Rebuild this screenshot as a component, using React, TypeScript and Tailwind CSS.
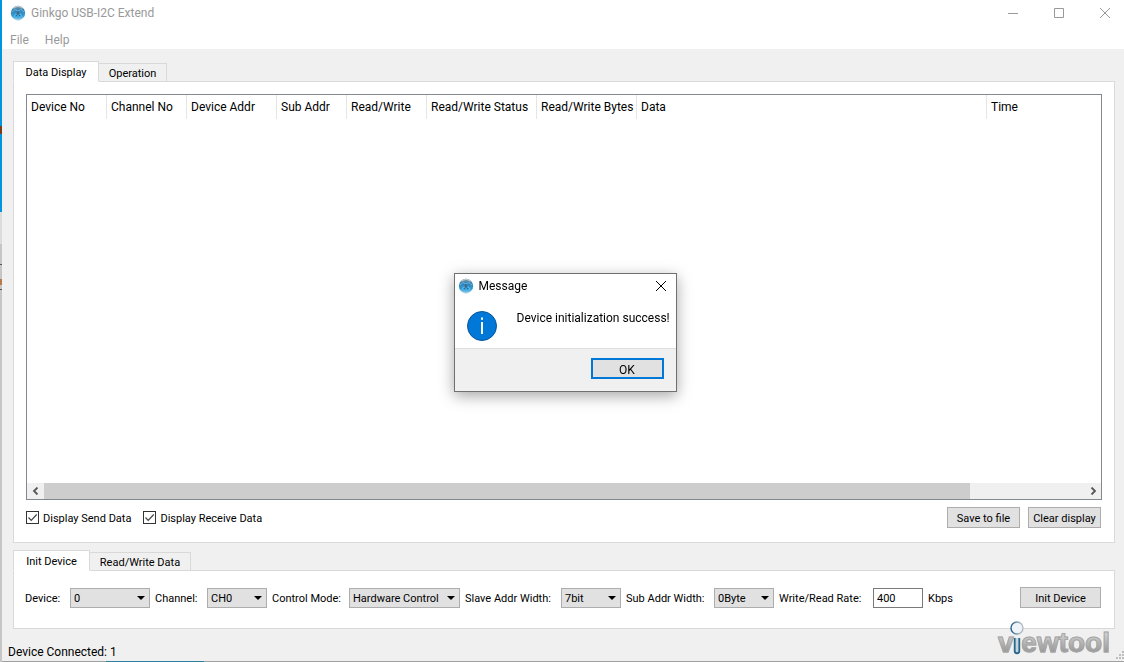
import { ReactNode, useState } from 'react';
import clsx from 'clsx';

const COLUMNS = [
  { title: 'Device No', width: 'w-[80px]' },
  { title: 'Channel No', width: 'w-[80px]' },
  { title: 'Device Addr', width: 'w-[90px]' },
  { title: 'Sub Addr', width: 'w-[70px]' },
  { title: 'Read/Write', width: 'w-[80px]' },
  { title: 'Read/Write Status', width: 'w-[110px]' },
  { title: 'Read/Write Bytes', width: 'w-[100px]' },
  { title: 'Data', width: 'w-[350px]' },
  { title: 'Time', width: '' },
];

const DISPLAY_TABS = [
  { name: 'Data Display', width: 'w-[86px]' },
  { name: 'Operation', width: 'w-[68px]' },
];

const DEVICE_TABS = [
  { name: 'Init Device', width: 'w-[77px]' },
  { name: 'Read/Write Data', width: 'w-[101px]' },
];

const FIELDS = [
  { id: 'device', label: 'Device:', labelWidth: 'w-[40px]', width: 'w-[80px]', options: ['0', '1', '2'] },
  { id: 'channel', label: 'Channel:', labelWidth: 'w-[47px]', width: 'w-[60px]', options: ['CH0', 'CH1'] },
  { id: 'mode', label: 'Control Mode:', labelWidth: 'w-[72px]', width: 'w-[111px]', options: ['Hardware Control', 'Software Control'] },
  { id: 'slave', label: 'Slave Addr Width:', labelWidth: 'w-[91px]', width: 'w-[60px]', options: ['7bit', '10bit'] },
  { id: 'sub', label: 'Sub Addr Width:', labelWidth: 'w-[83px]', width: 'w-[60px]', options: ['0Byte', '1Byte', '2Byte'] },
];

function AppIcon() {
  return (
    <svg viewBox="0 0 16 16" className="h-4 w-4 shrink-0" aria-hidden>
      <defs>
        <linearGradient id="globe" x1="0" x2="0" y1="0" y2="1">
          <stop offset="0" stopColor="#7d98aa" />
          <stop offset="0.3" stopColor="#3580b0" />
          <stop offset="0.7" stopColor="#2f9dd8" />
          <stop offset="1" stopColor="#8ccdec" />
        </linearGradient>
      </defs>
      <circle cx="8" cy="8" r="7.2" fill="url(#globe)" />
      <path d="M3.500 3.200C5 1.800 6.500 1.300 8 1.300s3 .5 4.500 1.900" fill="none" stroke="#b9c6ce" strokeWidth="1.200" />
      <path d="M2 7l3-2.500L8 6l3-1.500L14 7M4 12l1.500-3L8 10l2.500-1L12 12" fill="none" stroke="#6fc3ea" strokeWidth="0.8" />
      <path d="M8 8.500V6M8 8.500 6 11M8 8.500l2 2.500" fill="none" stroke="#1c5e8c" strokeWidth="0.9" />
      <path d="M6.800 7 8.500 9" stroke="#7d4a58" strokeWidth="1" />
      <path d="M3 13c1.600 1.600 3.200 2.200 5 2.200s3.400-.6 5-2.200" fill="none" stroke="#c4dce8" strokeWidth="0.9" />
    </svg>
  );
}

function Tabs({ tabs }: { tabs: { name: string; width: string }[] }) {
  const [active, setActive] = useState(tabs[0].name);
  return (
    <div role="tablist" className="relative z-10 -mb-px flex h-[21px] items-end">
      {tabs.map(({ name, width }) => (
        <button
          key={name}
          type="button"
          role="tab"
          aria-selected={name === active}
          onClick={() => setActive(name)}
          className={clsx(
            'border border-[#d9d9d9] pt-0.5 whitespace-nowrap',
            name === active ? 'h-[21px] border-b-white bg-white' : 'h-[19px] border-l-0 bg-[#f0f0f0]',
            width,
          )}
        >
          {name}
        </button>
      ))}
    </div>
  );
}

function PushButton({ children, className }: { children: ReactNode; className?: string }) {
  return (
    <button type="button" className={clsx('h-[21px] shrink-0 border border-[#adadad] bg-[#e1e1e1] pt-0.5 whitespace-nowrap hover:border-[#0078d7]', className)}>
      {children}
    </button>
  );
}

function Check({ label }: { label: string }) {
  return (
    <label className="flex items-center gap-1">
      <span className="relative h-[13px] w-[13px]">
        <input type="checkbox" defaultChecked className="peer block h-[13px] w-[13px] appearance-none border border-[#333] bg-white" />
        <svg viewBox="0 0 13 13" className="pointer-events-none absolute inset-0 hidden peer-checked:block" aria-hidden>
          <path d="m2.500 6.500 2.700 2.800L10.700 3.500" fill="none" stroke="#444" strokeWidth="1.2" />
        </svg>
      </span>
      <span className="pt-0.5">{label}</span>
    </label>
  );
}

function ScrollArrow({ label, d }: { label: string; d: string }) {
  return (
    <button type="button" aria-label={label} className="flex h-[15px] w-[17px] items-center justify-center">
      <svg viewBox="0 0 8 8" className="h-2 w-2" aria-hidden>
        <path d={d} fill="none" stroke="#555" strokeWidth="1.800" />
      </svg>
    </button>
  );
}

function Logo() {
  return (
    <div className="absolute right-[14px] bottom-1 flex bg-gradient-to-b from-[#cfcfcf] from-20% to-[#8a8a8a] bg-clip-text font-['Liberation_Sans',sans-serif] text-[28px] leading-7 font-bold text-transparent [-webkit-text-stroke:1px_#a6a6a6]">
      <span>v</span>
      <span className="relative">
        <span className="[-webkit-text-stroke:0]">i</span>
        <svg viewBox="0 0 14 36" className="absolute bottom-0.5 left-[-4px] h-9 w-3.5" aria-hidden>
          <defs>
            <linearGradient id="ring" x1="0" x2="1">
              <stop offset="0" stopColor="#1f5f88" />
              <stop offset="0.800" stopColor="#b4bcc2" />
            </linearGradient>
          </defs>
          <circle cx="7" cy="9" r="6" fill="#eff4f9" stroke="url(#ring)" strokeWidth="1.400" />
          <path d="M4.700 19v13c0 3 4.600 3 4.600 0V19" fill="#c5d5e0" stroke="#2a6689" strokeWidth="1.800" />
        </svg>
      </span>
      <span>ewtool</span>
    </div>
  );
}

function MessageBox({ onClose }: { onClose: () => void }) {
  return (
    <div className="fixed inset-0 flex items-center justify-center pt-[2px] pl-[6px]">
      <div role="dialog" aria-labelledby="message-title" className="w-[223px] border border-[#707070] bg-white text-xs shadow-[0_4px_14px_rgba(0,0,0,0.35)]">
        <div className="flex h-6 items-center pr-2.5 pl-[3px]">
          <AppIcon />
          <h2 id="message-title" className="ml-[5px] flex-1">Message</h2>
          <button type="button" aria-label="Close" onClick={onClose}>
            <svg viewBox="0 0 10 10" className="h-2.5 w-2.5" aria-hidden>
              <path d="m0 0 10 10M10 0 0 10" stroke="#000" />
            </svg>
          </button>
        </div>
        <div className="flex h-[50px] gap-5 pt-3 pl-3">
          <svg viewBox="0 0 30 30" className="mt-px h-[30px] w-[30px] shrink-0" aria-hidden>
            <circle cx="15" cy="15" r="14.500" fill="#0078d7" stroke="#0a559b" />
            <path d="M14 11h2v12h-2zM14 6.500h2v2.200h-2z" fill="#fff" />
          </svg>
          <p className="h-4 leading-4 whitespace-nowrap">Device initialization success!</p>
        </div>
        <div className="flex h-[43px] justify-end border-t border-[#dfdfdf] bg-[#f0f0f0] pt-[9px] pr-3">
          <button type="button" onClick={onClose} className="h-[21px] w-[73px] border-2 border-[#0078d7] bg-[#e1e1e1] pt-0.5">
            OK
          </button>
        </div>
      </div>
    </div>
  );
}

export default function App() {
  const [showMessage, setShowMessage] = useState(true);

  return (
    <div className="flex min-h-screen bg-[#f0f0f0] font-['Roboto',sans-serif] text-[11px] leading-4 text-black">
      {/* sliver of the desktop behind the window */}
      <div className="flex w-0.5 shrink-0 flex-col bg-[#c6c6c6]">
        <div className="h-[126px] bg-[#0095dc]" />
        <div className="h-2 bg-[#7a3c1e]" />
        <div className="h-[78px] bg-[#0095dc]" />
        <div className="h-8 bg-[#dcdcdc]" />
        <div className="mt-5 h-px bg-[#555]" />
        <div className="mt-3.5 h-1.5 bg-[#b87a4c]" />
        <div className="mt-1 h-px bg-[#555]" />
      </div>

      <div className="flex min-w-0 flex-1 flex-col">
        <header className="bg-white text-xs text-[#999]">
          <div className="flex h-7 items-center pb-0.5 pl-2">
            <AppIcon />
            <h1 className="ml-[5px] flex-1">Ginkgo USB-I2C Extend</h1>
            <div className="flex items-center gap-9 pr-3.5">
              <button type="button" aria-label="Minimize">
                <svg viewBox="0 0 10 10" className="h-2.5 w-2.5" aria-hidden>
                  <path d="M0 5.500h10" stroke="#999" />
                </svg>
              </button>
              <button type="button" aria-label="Maximize">
                <svg viewBox="0 0 10 10" className="h-2.5 w-2.5" aria-hidden>
                  <path d="M.5.5h9v9h-9z" fill="none" stroke="#999" />
                </svg>
              </button>
              <button type="button" aria-label="Close window">
                <svg viewBox="0 0 10 10" className="h-2.5 w-2.5" aria-hidden>
                  <path d="m0 0 10 10M10 0 0 10" stroke="#999" />
                </svg>
              </button>
            </div>
          </div>
          <nav className="flex h-[21px] items-center gap-4 pt-[3px] pl-2">
            <button type="button">File</button>
            <button type="button">Help</button>
          </nav>
        </header>

        <main className="flex flex-1 flex-col pt-3 pr-[9px] pl-[11px]">
          <Tabs tabs={DISPLAY_TABS} />
          <section className="flex flex-1 flex-col border border-[#d9d9d9] bg-white px-3 pt-3 pb-3.5">
            <div className="flex flex-1 flex-col border border-[#828790] bg-white">
              <table className="w-full table-fixed border-separate border-spacing-0 text-xs">
                <thead>
                  <tr className="h-6">
                    {COLUMNS.map(({ title, width }) => (
                      <th key={title} className={clsx('border-r border-[#e5e5e5] pl-1 text-left font-normal whitespace-nowrap last:border-r-0', width)}>
                        {title}
                      </th>
                    ))}
                  </tr>
                </thead>
                <tbody />
              </table>
              <div className="mt-auto flex h-4 bg-[#f0f0f0]">
                <ScrollArrow label="Scroll left" d="M5.500.5 2 4l3.500 3.500" />
                <div className="flex-1">
                  <div className="h-full w-[89%] bg-[#cdcdcd]" />
                </div>
                <ScrollArrow label="Scroll right" d="M2.500.5 6 4 2.500 7.500" />
              </div>
            </div>
            <div className="mt-[7px] flex items-center pr-px">
              <div className="flex gap-3">
                <Check label="Display Send Data" />
                <Check label="Display Receive Data" />
              </div>
              <div className="ml-auto flex gap-2">
                <PushButton className="w-[73px]">Save to file</PushButton>
                <PushButton className="w-[73px]">Clear display</PushButton>
              </div>
            </div>
          </section>

          <div className="h-[7px]" />
          <Tabs tabs={DEVICE_TABS} />
          <form className="flex h-[59px] items-center gap-[5px] border border-[#d9d9d9] bg-white pr-[13px] pb-1 pl-[11px]">
            {FIELDS.map(({ id, label, labelWidth, width, options }) => (
              <div key={id} className="flex items-center gap-[5px]">
                <label htmlFor={id} className={clsx('pt-0.5 whitespace-nowrap', labelWidth)}>{label}</label>
                <div className={clsx('relative h-5', width)}>
                  <select id={id} className="block h-5 w-full appearance-none border border-[#adadad] bg-[#e1e1e1] pt-0.5 pl-[3px] leading-4">
                    {options.map((option) => (
                      <option key={option}>{option}</option>
                    ))}
                  </select>
                  <svg viewBox="0 0 8 4" className="pointer-events-none absolute top-2 right-[5px] h-1 w-2" aria-hidden>
                    <path d="M0 0h8L4 4Z" />
                  </svg>
                </div>
              </div>
            ))}
            <label htmlFor="rate" className="w-[89px] pt-0.5 whitespace-nowrap">Write/Read Rate:</label>
            <input id="rate" type="text" defaultValue="400" className="h-5 w-[50px] border border-[#7a7a7a] bg-white px-[3px] pt-0.5" />
            <span className="pt-0.5">Kbps</span>
            <PushButton className="ml-auto w-[81px]">Init Device</PushButton>
          </form>
        </main>

        <footer className="relative flex h-8 items-center pt-3.5 pl-1.5 text-xs">
          <span>Device Connected: 1</span>
          <Logo />
          <svg viewBox="0 0 8 8" className="absolute right-0 bottom-0.5 h-2 w-2" fill="#bfbfbf" aria-hidden>
            <path d="M6 0h2v2H6zM3 3h2v2H3zM6 3h2v2H6zM0 6h2v2H0zM3 6h2v2H3zM6 6h2v2H6z" />
          </svg>
        </footer>
        <div className="flex h-px bg-[#a0a0a0]">
          <div className="ml-[104px] w-[98px] bg-[#2d7f9d]" />
        </div>
      </div>

      {showMessage ? <MessageBox onClose={() => setShowMessage(false)} /> : null}
    </div>
  );
}
